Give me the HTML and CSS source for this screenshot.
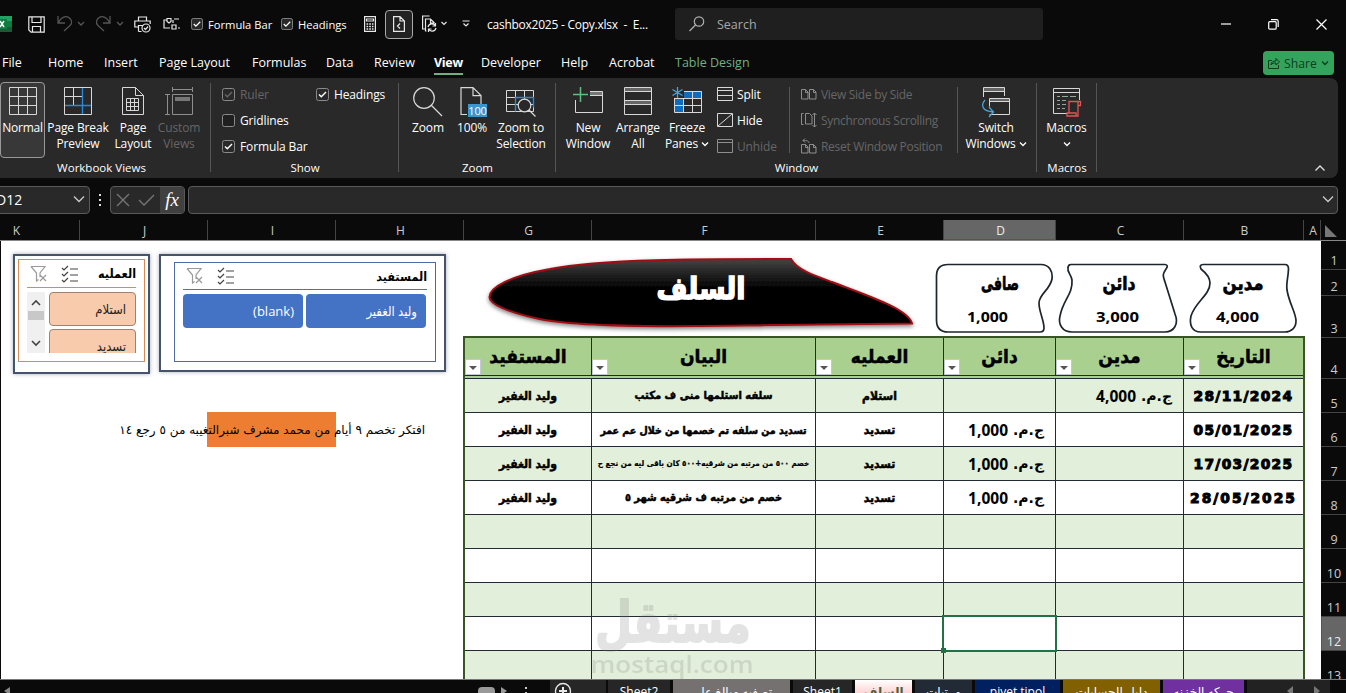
FILE: index.html
```html
<!DOCTYPE html>
<html lang="en">
<head>
  <meta charset="utf-8">
  <title>cashbox2025 - Copy.xlsx - Excel</title>
  <link rel="stylesheet" href="styles.css">
</head>
<body>
  <svg class="defs" width="0" height="0">
    <symbol id="chev" viewBox="0 0 8 6"><path d="M1 1.5l3 3 3-3" fill="none" stroke="currentColor" stroke-width="1.3"/></symbol>
    <symbol id="box" viewBox="0 0 13 13"><rect x=".5" y=".5" width="12" height="12" rx="2" fill="#1f1f1f" stroke="#8a8a8a"/></symbol>
    <symbol id="checked" viewBox="0 0 13 13"><rect x=".5" y=".5" width="12" height="12" rx="2" fill="#292929" stroke="#8a8a8a"/><path d="M3 6.5l2.3 2.3L10 4" fill="none" stroke="currentColor" stroke-width="1.4"/></symbol>
    <symbol id="clear" viewBox="0 0 18 18"><path d="M1 1.500H15L10 8v4M1 1.500L6.500 8v8l2-1.500M10 10l6 6M16 10l-6 6" fill="none" stroke="#9a9a9a" stroke-width="1.200"/></symbol>
    <symbol id="multi" viewBox="0 0 18 18"><path d="M1 3l2 2 4-4M1 9l2 2 4-4M1 15l2 2 4-4M9 4h8M9 10h8M9 16h8" fill="none" stroke="#444" stroke-width="1.200"/></symbol>
    <symbol id="pages" viewBox="0 0 16 12"><path d="M.5 1.500h4l2.500 2.500v7h-6.500zM8.500 1.500h4l2.500 2.500v7h-6.500zM4.500 1.500v3h2.500M12.500 1.500v3h2.500" fill="none" stroke="currentColor"/></symbol>
  </svg>

  <div class="titlebar">
    <svg class="logo" width="12" height="16" viewBox="0 0 12 16"><path d="M0 0h12v16H0z" fill="#21a366"/><path d="M6 5h6v6H6z" fill="#107c41"/><path d="M0 11h12v5H0z" fill="#185c37"/><path d="M0 3h7v10H0z" fill="#107c41"/><path d="M0 5l4 6M4 5l-4 6" stroke="#fff" stroke-width="1.400"/></svg>
    <svg class="save" width="17" height="17" viewBox="0 0 17 17" fill="none" stroke="#e8e8e8" stroke-width="1.200"><path d="M.8.8h15.400v15.400H3l-2.200-2.200zM4 .8v5.700h9V.8M4.500 16v-5.500h8V16"/></svg>
    <svg class="undo" width="28" height="18" viewBox="0 0 28 18" fill="none" stroke="#555" stroke-width="1.300"><path d="M1 1v7h7M1.500 7.500C5 1 10 .500 13 3.500c3 3 1 6 0 7L7 16M21 7l3 3 3-3"/></svg>
    <svg class="redo" width="28" height="18" viewBox="0 0 28 18" fill="none" stroke="#555" stroke-width="1.300"><path d="M14 1v7H7M13.500 7.500C10 1 5 .500 2 3.500c-3 3-1 6 0 7L8 16M21 7l3 3 3-3"/></svg>
    <svg class="print" width="17" height="17" viewBox="0 0 17 17" fill="none" stroke="#e8e8e8" stroke-width="1.200"><path d="M4.500 5V1h8v4M4 11H.800V5h15.400v3M4.500 15.500V9.500h5M4.500 15.500h3"/><circle cx="12" cy="12" r="4"/><path d="M10 12l1.500 1.500 2.500-3"/></svg>
    <svg class="shapes" width="17" height="14" viewBox="0 0 17 14" fill="none" stroke="#e8e8e8" stroke-width="1.200"><path d="M4 3H1v8h4M4 1.500h4v3L6 6 4 4.500zM11 2h5M9 8h4v4H9zM5 11h2M15 11h2M10 3v3"/></svg>
    <label class="qcheck"><svg width="12" height="12"><use href="#checked"/></svg>Formula Bar</label>
    <label class="qcheck heads"><svg width="12" height="12"><use href="#checked"/></svg>Headings</label>
    <svg class="calc" width="12" height="16" viewBox="0 0 12 16" fill="none" stroke="#e8e8e8" stroke-width="1.200"><path d="M.6.6h10.800v14.800H.600zM2.500 3h7v2h-7z"/><path d="M2.500 8h7M2.500 10.500h7M2.500 13h7" stroke-width="1.500" stroke-dasharray="1.700 1"/></svg>
    <span class="qactive"><svg width="12" height="16" viewBox="0 0 12 16" fill="none" stroke="#e8e8e8" stroke-width="1.200"><path d="M.6.6h6.400l4.400 4.400v10.400H.600zM7 .600V5h4.400M7 7.500l-2.500 2.500 2.500 2.500"/></svg></span>
    <svg class="refresh" width="26" height="18" viewBox="0 0 26 18" fill="none" stroke="#e8e8e8" stroke-width="1.200"><path d="M3 14H.6V1h7M4.500 16H3.500V4h5l4 4M8.500 4v4h4M6 12c1-4 6-4 7.500-1M13.500 8v3h-3M14 13c-1 4-6 4-7.500 1M6.500 17v-3h3M19.500 7l2.500 2.500L24.500 7"/></svg>
    <svg class="more" width="8" height="8" viewBox="0 0 8 8" fill="none" stroke="#e8e8e8" stroke-width="1.200"><path d="M.5 1h7M1.500 3.500L4 6l2.500-2.500"/></svg>
    <span class="filename">cashbox2025 - Copy.xlsx &nbsp;-&nbsp; E...</span>
    <div class="search"><svg width="16" height="16" viewBox="0 0 16 16" fill="none" stroke="#b0b0b0" stroke-width="1.200"><circle cx="10" cy="5.500" r="4.700"/><path d="M6.500 9L.500 15"/></svg>Search</div>
    <div class="winbtns">
      <svg width="10" height="12" viewBox="0 0 10 12"><path d="M0 6h10" stroke="#fff" stroke-width="1.200"/></svg>
      <svg width="11" height="11" viewBox="0 0 11 11" fill="none" stroke="#fff" stroke-width="1.200"><rect x=".7" y="2.700" width="7.500" height="7.500" rx="1"/><path d="M3 .700h5.500q1.700 0 1.700 1.700V8"/></svg>
      <svg width="11" height="11" viewBox="0 0 11 11"><path d="M.5.500l10 10M10.500.500l-10 10" stroke="#fff" stroke-width="1.200"/></svg>
    </div>
  </div>

  <div class="menubar">
    <nav class="tabs">
      <span>File</span><span>Home</span><span>Insert</span><span>Page Layout</span><span>Formulas</span><span>Data</span><span>Review</span><span><b class="current">View</b></span><span>Developer</span><span>Help</span><span>Acrobat</span><span class="context">Table Design</span>
    </nav>
    <button class="share"><svg width="12" height="12" viewBox="0 0 12 12" fill="none" stroke="#0b3d1e"><path d="M4 3.500H.500v8h10V8M3 8c0-3 2-4 5-4V1.500L11.500 5 8 8V6C6 6 4 6 3 8z"/></svg>Share<svg width="8" height="6"><use href="#chev"/></svg></button>
  </div>

  <div class="ribbon">
    <section class="group views">
      <div class="tools">
        <div class="big pressed"><svg width="28" height="28" viewBox="0 0 28 28" fill="none" stroke="#d8d8d8"><path d="M.5.500h27v27H.500zM9.500 0v28M18.500 0v28M0 9.500h28M0 18.500h28"/></svg><span>Normal</span></div>
        <div class="big"><svg width="28" height="28" viewBox="0 0 28 28" fill="none" stroke="#d8d8d8"><path d="M.5.500h27v27H.500zM9.500 0v18M0 9.500h18"/><path d="M18.500 1v26M1 18.500h26" stroke="#2b88d8" stroke-width="1.400"/></svg><span>Page Break<br>Preview</span></div>
        <div class="big"><svg width="22" height="28" viewBox="0 0 22 28" fill="none" stroke="#d8d8d8"><path d="M.5.500h13l8 8v19H.500zM13.500.500v8h8M4.500 11.500h12v12h-12zM8.500 11.500v12M12.500 11.500v12M4.500 15.500h12M4.500 19.500h12"/></svg><span>Page<br>Layout</span></div>
        <div class="big off"><svg width="28" height="28" viewBox="0 0 28 28" fill="none" stroke="#8e8e8e"><path d="M7.500 7.500h20v20h-20zM2.500 7v20M0 7.500h5M0 27.500h5M7.500 0v5M27.500 0v5M7.500 2.500h20"/><path d="M10 10h15v4H10z" fill="#777" stroke="none"/></svg><span>Custom<br>Views</span></div>
      </div>
      <h6>Workbook Views</h6>
    </section>
    <section class="group show">
      <div class="checks">
        <label class="off"><svg width="13" height="13"><use href="#checked"/></svg>Ruler</label><label><svg width="13" height="13"><use href="#checked"/></svg>Headings</label>
        <label><svg width="13" height="13"><use href="#box"/></svg>Gridlines</label><i></i>
        <label><svg width="13" height="13"><use href="#checked"/></svg>Formula Bar</label>
      </div>
      <h6>Show</h6>
    </section>
    <section class="group zoom">
      <div class="tools">
        <div class="big"><svg width="30" height="30" viewBox="0 0 30 30" fill="none" stroke="#d8d8d8" stroke-width="1.200"><circle cx="11" cy="11" r="10.300"/><path d="M18 18l11 11"/></svg><span>Zoom</span></div>
        <div class="big"><svg width="26" height="30" viewBox="0 0 26 30" fill="none" stroke="#d8d8d8" stroke-width="1.200"><path d="M8 27.500H2V.600h12l8 8V17M14 .600v8h8"/><path d="M9 17h19v13H9z" fill="#3a96d0" stroke="none"/><text class="hundred" x="18.500" y="27.500" text-anchor="middle">100</text></svg><span>100%</span></div>
        <div class="big"><svg width="30" height="30" viewBox="0 0 30 30" fill="none" stroke="#d8d8d8"><path d="M.5 3.500h27v21H.500zM9.500 3v22M18.500 3v22M0 10.500h28M0 17.500h28"/><path d="M9.500 24.500v-14h18v10" stroke="#2b88d8" stroke-width="1.400"/><circle cx="18.500" cy="18.500" r="6.300" fill="#292929" stroke-width="1.200"/><path d="M23 23l6.500 6.500" stroke-width="1.300"/></svg><span>Zoom to<br>Selection</span></div>
      </div>
      <h6>Zoom</h6>
    </section>
    <section class="group window">
      <div class="tools">
        <div class="big"><svg width="30" height="28" viewBox="0 0 30 28" fill="none" stroke="#d8d8d8"><path d="M17 4.500h12.500v21h-27V13M17 8.500h12"/><path d="M17 5h12v3H17z" fill="#777" stroke="none"/><path d="M7.500 0v15M0 7.500h15" stroke="#5fbf7f" stroke-width="1.500"/></svg><span>New<br>Window</span></div>
        <div class="big"><svg width="28" height="28" viewBox="0 0 28 28" fill="none" stroke="#d8d8d8"><path d="M1 1h26v3H1zM1 14h26v3H1z" fill="#666" stroke="none"/><path d="M.5.500h27v27H.500zM0 4.500h28M0 13.500h28M0 17.500h28"/></svg><span>Arrange<br>All</span></div>
        <div class="big"><svg width="30" height="30" viewBox="0 0 30 30" fill="none" stroke="#d8d8d8"><path d="M2 4h28v7H2zM2 11h9v14H2z" fill="#0f6cbd" stroke="none"/><path d="M12 4.500h17.500v21h-27V12M11.500 8v17M20.500 4v21M2 11.500h28M2 18.500h28"/><path d="M0 -1h12v12H0z" fill="#292929" stroke="none"/><path d="M5.500 0v11M.500 2.500l10 6M10.500 2.500l-10 6" stroke="#4ba3d8" stroke-width="1.300"/></svg><span>Freeze<br>Panes <svg width="8" height="6"><use href="#chev"/></svg></span></div>
        <div class="list">
          <span><svg width="16" height="14" viewBox="0 0 16 14" fill="none" stroke="#d8d8d8"><path d="M.5.500h15v13H.500zM0 3.500h16M0 8.500h16"/></svg>Split</span>
          <span><svg width="16" height="14" viewBox="0 0 16 14" fill="none" stroke="#d8d8d8"><path d="M.5.500h15v13H.500zM1 13L15 1"/></svg>Hide</span>
          <span class="off"><svg width="16" height="14" viewBox="0 0 16 14" fill="none" stroke="#8e8e8e"><path d="M.5.500h15v13H.500zM0 3.500h16"/></svg>Unhide</span>
        </div>
        <div class="list sync off">
          <span><svg width="16" height="12"><use href="#pages"/></svg>View Side by Side</span>
          <span><svg width="16" height="16" viewBox="0 0 16 16" fill="none" stroke="currentColor"><path d="M2.500 1.500H.5v11h2M4.500 1.500h4l2.500 2.500v8h-6.500zM13.500 1v14M11.500 3l2-2 2 2M11.500 13l2 2 2-2"/></svg>Synchronous Scrolling</span>
          <span><svg width="16" height="16" viewBox="0 0 16 16" fill="none" stroke="currentColor"><path d="M.5 6.500h4l2.500 2.500v6H.500zM8.500 6.500h4l2.500 2.500v6H8.500zM4.500 6.500v3H7M12.500 6.500v3H15M8 5C8 3 6 2.500 2 2.500M4 .500l-2 2 2 2"/></svg>Reset Window Position</span>
        </div>
        <div class="big switch"><svg width="30" height="31" viewBox="0 0 30 31" fill="none" stroke="#d8d8d8"><path d="M3 1h20v3H3zM9 12h20v2H9z" fill="#666" stroke="none"/><path d="M2.500 10V.500h21V9M2 4.500h21M8.500 11.500h20v16h-20M8.500 11.500v8M8 14.500h20"/><path d="M4 13c-5 6-2 11 8 12M8 20l4.500 5L8 30" stroke="#4ba3d8" stroke-width="1.300"/></svg><span>Switch<br>Windows <svg width="8" height="6"><use href="#chev"/></svg></span></div>
      </div>
      <h6>Window</h6>
    </section>
    <section class="group macros">
      <div class="tools">
        <div class="big"><svg width="30" height="30" viewBox="0 0 30 30" fill="none" stroke="#d8d8d8"><path d="M15 26.500H1.500v-25h26V13M1 5.500h26"/><path d="M5 9.500h3M10 9.500h6M18 9.500h6M5 13.500h3M10 13.500h4M5 17.500h3M10 17.500h4M5 21.500h3M10 21.500h3" stroke="#91a89a"/><path d="M17 26V14.500h11.500v4H26V29H15v-3h9v3M26 14.500v4" stroke="#e05555" stroke-width="1.300"/></svg><span>Macros<br><svg width="8" height="6"><use href="#chev"/></svg></span></div>
      </div>
      <h6>Macros</h6>
    </section>
    <svg class="collapse" width="12" height="8" viewBox="0 0 12 8"><path d="M1.500 6.500L6 2l4.500 4.500" fill="none" stroke="#e0e0e0" stroke-width="1.300"/></svg>
  </div>

  <div class="formulabar">
    <div class="namebox"><span>D12</span><svg width="12" height="8" viewBox="0 0 12 8"><path d="M1 1.500l5 5 5-5" fill="none" stroke="#ccc" stroke-width="1.300"/></svg></div>
    <svg class="dots" width="2" height="12"><path d="M0 0h2v2H0zM0 5h2v2H0zM0 10h2v2H0z" fill="#ddd"/></svg>
    <div class="fxbox"><svg width="40" height="14" viewBox="0 0 40 14" fill="none" stroke="#777" stroke-width="1.300"><path d="M1 1l12 12M13 1L1 13M23 7l5 5L38 2"/></svg><span class="fx">fx</span></div>
    <div class="input"><svg width="12" height="8" viewBox="0 0 12 8"><path d="M1 1.500l5 5 5-5" fill="none" stroke="#ccc" stroke-width="1.300"/></svg></div>
  </div>

  <div class="colheads">
    <span class="k">K</span><span>J</span><span>I</span><span>H</span><span>G</span><span>F</span><span>E</span><span class="sel">D</span><span>C</span><span>B</span><span>A</span><span class="corner"><svg width="12" height="12"><path d="M0 0v12h12z" fill="#777"/></svg></span>
  </div>

  <div class="main">
    <div class="sheet">
      <div class="slicer op">
        <div class="pane">
          <div class="shead"><svg width="18" height="18"><use href="#clear"/></svg><svg width="18" height="18"><use href="#multi"/></svg><b>العمليه</b></div>
          <div class="sbody">
            <div class="scroll"><svg width="18" height="61" viewBox="0 0 18 61"><path d="M5 13l4-4 4 4M5 49l4 4 4-4" fill="none" stroke="#444" stroke-width="1.600"/><path d="M1 19h16v9H1z" fill="#c8c8c8"/></svg></div>
            <div class="items"><span>استلام</span><span>تسديد</span></div>
          </div>
        </div>
      </div>
      <div class="slicer who">
        <div class="pane">
          <div class="shead"><svg width="18" height="18"><use href="#clear"/></svg><svg width="18" height="18"><use href="#multi"/></svg><b>المستفيد</b></div>
          <div class="items"><span>(blank)</span><span>وليد الغفير</span></div>
        </div>
      </div>
      <div class="note"><i></i><span dir="rtl">افتكر تخصم ٩ أيام من محمد مشرف شبرالتغيبه من ٥ رجع ١٤</span></div>

      <svg class="drawings" width="1320" height="97" viewBox="0 241 1320 97">
        <defs>
          <linearGradient id="gloss" x1="0" y1="0" x2="0" y2="1"><stop offset="0" stop-color="#444"/><stop offset=".45" stop-color="#000"/></linearGradient>
          <filter id="drop" x="-5%" y="-20%" width="110%" height="150%"><feDropShadow dx="0" dy="2" stdDeviation="2" flood-opacity=".5"/></filter>
        </defs>
        <path d="M791 259C797 270 815 276 832 282C862 294 908 308 912 323.500L700 326C600 327 555 323 535 318C508 312 489 304 489.500 297C490 287 510 276 550 269C600 259 700 259 791 259Z" fill="url(#gloss)" stroke="#a01014" stroke-width="2" filter="url(#drop)"/>
        <text class="banner" x="701" y="299" textLength="89" lengthAdjust="spacingAndGlyphs">السلف</text>
        <g fill="#fff" stroke="#1e252b" stroke-width="1.700">
          <path d="M948 264.500H1041C1049 264.500 1053 271 1052 279C1050 290 1039 294 1039 303C1039 312 1044 320 1044 328Q1044 332 1040 332H948Q936.500 332 936.500 320V276Q936.500 264.500 948 264.500Z"/>
          <path d="M1071 264.500H1165Q1169 265 1166 269C1162 275 1163 276 1165 282L1175 314C1179 324 1174 332 1165 332H1072C1062 332 1058 324 1060 316C1063 300 1073 294 1072 280C1071 274 1067 272 1068 268Q1068 264.500 1071 264.500Z"/>
          <path d="M1203 264.500H1285Q1288.500 264.500 1288.500 269C1288 280 1286 282 1287 290C1289 303 1296 313 1296 321C1296 328 1291 332 1285 332H1201C1192 332 1189 325 1191 316C1195 302 1210 295 1210 283C1210 277 1206 273 1201 269Q1199 264.500 1203 264.500Z"/>
        </g>
        <g class="cards">
          <text x="1000" y="290" textLength="38" lengthAdjust="spacingAndGlyphs">صافى</text>
          <text x="1119" y="290" textLength="33" lengthAdjust="spacingAndGlyphs">دائن</text>
          <text x="1243" y="290" textLength="41" lengthAdjust="spacingAndGlyphs">مدين</text>
        </g>
        <g class="sums">
          <text x="987.500" y="322" textLength="41" lengthAdjust="spacingAndGlyphs">1,000</text>
          <text x="1117.500" y="322" textLength="43" lengthAdjust="spacingAndGlyphs">3,000</text>
          <text x="1237.500" y="322" textLength="43" lengthAdjust="spacingAndGlyphs">4,000</text>
        </g>
      </svg>

      <div class="table">
        <div class="row head">
          <span>المستفيد<i></i></span><span>البيان<i></i></span><span>العمليه<i></i></span><span>دائن<i></i></span><span>مدين<i></i></span><span>التاريخ<i></i></span>
        </div>
        <div class="row"><span>وليد الغفير</span><span class="r1">سلفه استلمها منى ف مكتب</span><span>استلام</span><span></span><span class="money" dir="rtl"><em>ج.م.</em> 4,000</span><span class="date">28/11/2024</span></div>
        <div class="row"><span>وليد الغفير</span><span class="r2">تسديد من سلفه تم خصمها من خلال عم عمر</span><span>تسديد</span><span class="money" dir="rtl"><em>ج.م.</em> 1,000</span><span></span><span class="date">05/01/2025</span></div>
        <div class="row"><span>وليد الغفير</span><span class="r3" dir="rtl">خصم ٥٠٠ من مرتبه من شرقيه+٥٠٠ كان باقى ليه من نجع ح</span><span>تسديد</span><span class="money" dir="rtl"><em>ج.م.</em> 1,000</span><span></span><span class="date">17/03/2025</span></div>
        <div class="row"><span>وليد الغفير</span><span class="r4" dir="rtl">خصم من مرتبه ف شرقيه شهر ٥</span><span>تسديد</span><span class="money" dir="rtl"><em>ج.م.</em> 1,000</span><span></span><span class="date wide">28/05/2025</span></div>
        <div class="row"><span></span><span></span><span></span><span></span><span></span><span></span></div>
        <div class="row"><span></span><span></span><span></span><span></span><span></span><span></span></div>
        <div class="row"><span></span><span></span><span></span><span></span><span></span><span></span></div>
        <div class="row"><span></span><span></span><span></span><span class="cursor"></span><span></span><span></span></div>
        <div class="row"><span></span><span></span><span></span><span></span><span></span><span></span></div>
      </div>
      <svg class="watermark" width="180" height="84" viewBox="0 0 180 84">
        <text class="wm-ar" x="88" y="46" textLength="156" lengthAdjust="spacingAndGlyphs">مستقل</text>
        <text class="wm-en" x="87" y="77" textLength="163" lengthAdjust="spacingAndGlyphs">mostaql.com</text>
      </svg>
    </div>
    <div class="rownums">
      <span>1</span><span>2</span><span>3</span><span>4</span><span>5</span><span>6</span><span>7</span><span>8</span><span>9</span><span>10</span><span>11</span><span class="sel">12</span><span>13</span>
    </div>
  </div>

  <div class="sheetbar">
    <div class="hscroll"><svg width="550" height="13" viewBox="0 0 550 13"><path d="M10 7v8l-6-4z" fill="#888"/><rect x="478" y="7" width="17" height="12" rx="4" fill="#999"/><path d="M501 7v8l6-4z" fill="#999"/><path d="M525 7h2v2h-2zM525 12h2v1h-2z" fill="#ccc"/></svg></div>
    <div class="add"><svg width="18" height="18" viewBox="0 0 18 18" fill="none" stroke="#e8e8e8" stroke-width="1.300"><circle cx="9" cy="9" r="7.500"/><path d="M9 5v8M5 9h8" stroke-width="2"/></svg></div>
    <span class="tab">Sheet2</span>
    <span class="tab gray">تصفيه مبالغ على</span>
    <span class="tab">Sheet1</span>
    <span class="tab active">السلف</span>
    <span class="tab slate">مرتبات</span>
    <span class="tab navy">pivet tipol</span>
    <span class="tab gold">دليل الحسابات</span>
    <span class="tab purple">حركه الخزنه</span>
    <span class="navs"><svg width="84" height="13" viewBox="0 0 84 13"><path d="M46 6v10l-6-5zM67 6v10l6-5z" fill="#777"/></svg></span>
  </div>
</body>
</html>
```
FILE: styles.css
```css
* {
  box-sizing: border-box;
}

body {
  margin: 0;
  width: 1346px;
  height: 693px;
  overflow: hidden;
  background: #0a0a0a;
  color: #fff;
  font-family: "Open Sans", "Noto Sans", "DejaVu Sans", sans-serif;
  font-size: 12px;
}

svg {
  display: block;
  flex: none;
  overflow: visible;
}

.defs {
  position: absolute;
}

.off {
  color: #666;
}

/* title bar */
.titlebar {
  height: 48px;
  display: flex;
  align-items: center;
  white-space: nowrap;
}

.save { margin-left: 16px; }
.undo { margin-left: 12px; }
.redo { margin-left: 11px; }
.print { margin-left: 10px; }
.shapes { margin-left: 12px; }

.qcheck {
  display: flex;
  align-items: center;
  gap: 5px;
  width: 90px;
  margin-left: 11px;
  font-size: 11.2px;
}

.qcheck.heads {
  width: 82px;
  margin-left: 0;
}

.calc { margin: 0 0 0 1px; }

.qactive {
  display: flex;
  align-items: center;
  justify-content: center;
  width: 28px;
  height: 29px;
  margin-left: 9px;
  border: 1px solid #aaa;
  border-radius: 4px;
  background: #222;
}

.refresh { margin-left: 9px; }
.more { margin-left: 14px; }

.filename {
  width: 188px;
  margin-left: 17px;
  padding-top: 1px;
  font-size: 12px;
  letter-spacing: -0.25px;
}

.search {
  display: flex;
  align-items: center;
  gap: 12px;
  width: 368px;
  height: 32px;
  padding-left: 14px;
  border-radius: 3px;
  background: #1f1f1f;
  color: #a8a8a8;
  font-size: 12.5px;
}

.winbtns {
  display: flex;
  align-items: center;
  gap: 37px;
  margin-left: 178px;
}

/* ribbon tabs */
.menubar {
  height: 30px;
  display: flex;
  align-items: center;
  justify-content: space-between;
  padding: 0 12px 0 2px;
}

.tabs {
  display: grid;
  grid-template-columns: 46px 56px 55px 93px 74px 48px 60px 47px 80px 48px 66px 90px;
  padding-top: 1px;
  font-size: 12.5px;
  line-height: 22px;
  white-space: nowrap;
}

.current {
  display: inline-block;
  height: 23px;
  border-bottom: 2px solid #6fb183;
  letter-spacing: -0.3px;
}

.context {
  color: #6fb183;
}

.share {
  display: flex;
  align-items: center;
  gap: 4px;
  width: 71px;
  height: 24px;
  padding: 0 5px;
  border: 0;
  border-radius: 4px;
  background: #34a35c;
  color: #0b3d1e;
  font: 12.2px "Open Sans", sans-serif;
}

/* ribbon */
.ribbon {
  display: flex;
  width: 1338px;
  height: 100px;
  background: #292929;
  border-radius: 0 8px 8px 0;
  letter-spacing: -0.13px;
}

.group {
  display: flex;
  flex-direction: column;
  position: relative;
  padding-top: 4px;
  white-space: nowrap;
}

.group::after {
  content: "";
  position: absolute;
  top: 5px;
  right: 0;
  width: 1px;
  height: 89px;
  background: #555;
}

.group h6 {
  margin: auto 0 2px;
  font-size: 11.5px;
  font-weight: 400;
  line-height: 16px;
  letter-spacing: 0;
  text-align: center;
}

.views { width: 211px; }
.show { width: 188px; }
.zoom { width: 157px; }
.window { width: 481px; }
.macros { width: 60px; }
.views h6 { padding-right: 8px; }

.tools {
  display: grid;
  height: 76px;
}

.views .tools { grid-template-columns: 45px 66px 44px 48px; }
.zoom .tools { grid-template-columns: 58px 30px 68px; }
.window .tools { grid-template-columns: 60px 40px 58px 73px 169px 76px; padding-left: 2px; }
.macros .tools { grid-template-columns: 59px; }

.big {
  display: flex;
  flex-direction: column;
  align-items: center;
  justify-content: space-between;
  height: 76px;
  padding-top: 5px;
  text-align: center;
  line-height: 16px;
}

.big > span {
  height: 38px;
}

.big span svg {
  display: inline-block;
  vertical-align: 1px;
}

.pressed {
  border: 1px solid #999;
  border-radius: 4px;
  background: #383838;
  padding-top: 4px;
  letter-spacing: -0.25px;
}

.pressed > span {
  height: 37px;
}

.hundred {
  fill: #fff;
  stroke: none;
  font-size: 11px;
}

.checks {
  display: grid;
  grid-template-columns: 94px 90px;
  grid-auto-rows: 26px;
  padding-left: 11px;
  margin-top: -1px;
}

.checks label,
.list span {
  display: flex;
  align-items: center;
  gap: 5px;
  height: 26px;
}

.list span { gap: 4px; }

.list {
  margin: -1px 0 0 1px;
}

.list.sync {
  height: 66px;
  margin: 5px 0 0;
  padding-left: 11px;
  border-left: 1px solid #555;
  border-right: 1px solid #555;
  letter-spacing: -0.3px;
}

.sync span:first-child { margin-top: -6px; }
.sync svg { color: #8e8e8e; }

.collapse {
  margin: 86px 0 0 217px;
}

/* formula bar */
.formulabar {
  display: flex;
  align-items: center;
  height: 28px;
  margin-top: 8px;
}

.namebox,
.fxbox,
.input {
  display: flex;
  align-items: center;
  height: 28px;
  border: 1px solid #5a5a5a;
  border-radius: 4px;
  background: #292929;
}

.namebox {
  justify-content: space-between;
  width: 95px;
  margin-left: -5px;
  padding: 0 4px 2px 0;
  font-size: 14px;
}

.dots { margin: 0 9px 0 9px; }

.fxbox {
  width: 75px;
  padding-left: 5px;
}

.fx {
  display: flex;
  align-items: center;
  justify-content: center;
  width: 25px;
  height: 26px;
  margin-left: 4px;
  background: #404040;
  font: italic 19px "Liberation Serif", serif;
}

.input {
  width: 1150px;
  margin-left: 3px;
  padding: 0 3px 3px 0;
  justify-content: flex-end;
}

/* column headers */
.colheads {
  display: grid;
  grid-template-columns: 80px 128px 128px 128px 128px 224px 128px 112px 128px 120px 17px 25px;
  height: 21px;
  margin-top: 6px;
  border-bottom: 1px solid #888;
  color: #ccc;
  line-height: 22px;
  text-align: center;
}

.colheads span {
  height: 20px;
  padding-left: 2px;
  border-right: 1px solid #444;
}

.colheads .k { padding-right: 48px; }
.colheads .sel { background: #666; color: #eee; border-bottom: 1px solid #217346; }

.colheads .corner {
  border: 0;
  padding: 5px 0 0 4px;
}

/* sheet */
.main {
  display: flex;
  height: 438px;
  overflow: hidden;
}

.sheet {
  position: relative;
  width: 1321px;
  height: 438px;
  overflow: hidden;
  background: #fff;
  color: #000;
  border-left: 1px solid #0a0a0a;
}

.rownums {
  display: grid;
  grid-template-rows: 29px 26px 42px 41px;
  grid-auto-rows: 34px;
  width: 25px;
  color: #ccc;
  font-size: 12.5px;
}

.rownums span {
  display: flex;
  align-items: flex-end;
  justify-content: center;
  padding-left: 1px;
  border-bottom: 1px solid #444;
  line-height: 17px;
}

.rownums .sel {
  background: #666;
  color: #eee;
  padding: 0;
  border-left: 1px solid #217346;
}

.slicer {
  position: absolute;
  top: 13px;
  border: 2px solid #44546a;
  box-shadow: 0 0 4px #aab;
}

.slicer.op {
  left: 12px;
  width: 137px;
  height: 120px;
  padding: 3px;
}

.slicer.who {
  left: 158px;
  width: 287px;
  height: 118px;
  padding: 6px 8px 8px 13px;
}

.pane {
  height: 100%;
  padding: 0 8px;
  border: 1px solid #4a69a5;
}

.op .pane {
  height: 103px;
  border-color: #d98a55;
}

.shead {
  display: flex;
  align-items: center;
  gap: 13px;
  height: 27px;
  padding-left: 3px;
  border-bottom: 1px solid #4472c4;
}

.op .shead {
  height: 28px;
  border-color: #d98a55;
}

.shead b {
  margin-left: auto;
  font-family: "DejaVu Sans Condensed", "DejaVu Sans", sans-serif;
  font-size: 12.5px;
}

.who .items {
  display: flex;
  gap: 3px;
  margin-top: 4px;
}

.items span {
  display: flex;
  align-items: center;
  justify-content: flex-end;
  height: 34px;
  width: 120px;
  padding: 0 9px;
  border-radius: 4px;
  background: #4472c4;
  color: #fff;
  font-family: "Open Sans", "DejaVu Sans Condensed", "DejaVu Sans", sans-serif;
  font-size: 13px;
}

.op .items span {
  width: 87px;
  border: 1px solid #a08070;
  background: #f8cbad;
  color: #222;
  margin-bottom: 3px;
}

.sbody {
  display: flex;
  gap: 4px;
  height: 61px;
  margin-top: 4px;
  overflow: hidden;
}

.scroll { background: #f0f0f0; }

.note {
  position: absolute;
  left: 119px;
  top: 171px;
  width: 305px;
  height: 35px;
  display: flex;
  align-items: center;
  justify-content: flex-end;
}

.note i {
  position: absolute;
  left: 87px;
  top: 0;
  width: 129px;
  height: 35px;
  background: #ed7d31;
}

.note span {
  position: relative;
  font-family: "DejaVu Sans", sans-serif;
  font-size: 12px;
  white-space: nowrap;
}

.drawings {
  position: absolute;
  left: -1px;
  top: 0;
}

.banner,
.cards text,
.sums text {
  text-anchor: middle;
  font-family: "DejaVu Sans", sans-serif;
  font-weight: 700;
}

.banner {
  fill: #fff;
  stroke: #fff;
  stroke-width: 1.6px;
  font-size: 30px;
}

.cards text {
  font-size: 19px;
  stroke: #000;
  stroke-width: .7px;
}

.sums text {
  font-family: "Noto Sans", sans-serif;
  font-size: 15px;
}

/* ledger table */
.table {
  width: 842px;
  margin: 95px 0 0 462px;
  border: 2px solid #375623;
  border-bottom: 0;
}

.row {
  display: grid;
  grid-template-columns: 127px 224px 128px 112px 128px 119px;
  height: 34px;
  background: #fff;
  border-bottom: 1px solid #222b35;
}

.row:nth-child(even) {
  background: #e2efda;
}

.row span {
  position: relative;
  display: flex;
  align-items: center;
  justify-content: center;
  border-right: 1px solid #222b35;
  font-family: "DejaVu Sans Condensed", "DejaVu Sans", sans-serif;
  font-size: 12px;
  font-weight: 700;
  white-space: nowrap;
  -webkit-text-stroke: .5px #000;
}

.row span:last-child {
  border-right: 0;
}

.row.head {
  height: 41px;
  background: #a9d08e;
  border-bottom: 4px double #222b35;
}

.head span {
  padding-bottom: 2px;
  font-size: 19px;
}

.head i {
  position: absolute;
  left: 0;
  bottom: 0;
  width: 16px;
  height: 16px;
  border: 1px solid #c4c8d4;
  background: #fff;
}

.head i::after {
  content: "";
  position: absolute;
  left: 3px;
  top: 6px;
  border: 4px solid transparent;
  border-top-color: #555;
  border-bottom: 0;
}

.row .money {
  justify-content: flex-start;
  padding-right: 11px;
  gap: 5px;
  font-family: "Noto Sans", "DejaVu Sans", sans-serif;
  font-size: 15.5px;
  -webkit-text-stroke: 0;
}

.money em {
  font: bold 14px "DejaVu Sans", sans-serif;
}

.row .date {
  font-family: "DejaVu Sans", sans-serif;
  font-size: 13.8px;
  letter-spacing: 1.3px;
  -webkit-text-stroke: 1px #000;
}

.row .date.wide {
  letter-spacing: 2px;
}

.row .r1 { font-size: 11.1px; }
.row .r2 { font-size: 10.5px; }
.row .r3 { font-size: 8px; -webkit-text-stroke: .2px #000; }
.row .r4 { font-size: 10.9px; }

.row .cursor {
  z-index: 1;
  margin: -2px -1px -2px -2px;
  border: 2px solid #217346;
}

.row .cursor:not(:last-child) {
  border-right: 2px solid #217346;
}

.cursor::after {
  content: "";
  position: absolute;
  left: -3px;
  bottom: -3px;
  width: 5px;
  height: 5px;
  background: #217346;
}

.watermark {
  position: absolute;
  left: 584px;
  top: 355px;
  opacity: .2;
}

.watermark text {
  text-anchor: middle;
  fill: #777;
}

.wm-ar {
  font-family: "DejaVu Sans", sans-serif;
  font-size: 56px;
  font-weight: 700;
  stroke: #777;
  stroke-width: 2px;
  stroke-linejoin: round;
}

.wm-en {
  font-family: "Open Sans", sans-serif;
  font-size: 24px;
  font-weight: 600;
}

/* sheet tabs */
.sheetbar {
  display: grid;
  grid-template-columns: 550px 58px 65px 120px 62px 60px 60px 88px 100px 84px 83px;
  height: 14px;
  overflow: hidden;
  border-top: 1px solid #777;
}

.add {
  display: flex;
  justify-content: center;
  align-items: flex-start;
  margin-right: 2px;
  padding: 2px 30px 0 0;
  background: #262626;
}

.tab {
  height: 24px;
  margin-right: 3px;
  padding-top: 2px;
  background: #262626;
  line-height: 19px;
  text-align: center;
  font-family: "Open Sans", "DejaVu Sans", sans-serif;
  font-size: 12px;
  white-space: nowrap;
}

.gray { background: #757171; }
.slate { background: #222b35; }
.navy { background: #002060; }
.gold { background: #806000; }
.purple { background: #7030a0; }

.active {
  background: linear-gradient(#fff, #ffb0b0);
  color: #4d5f3a;
  font-weight: 700;
}

.navs { background: #222; }
```
